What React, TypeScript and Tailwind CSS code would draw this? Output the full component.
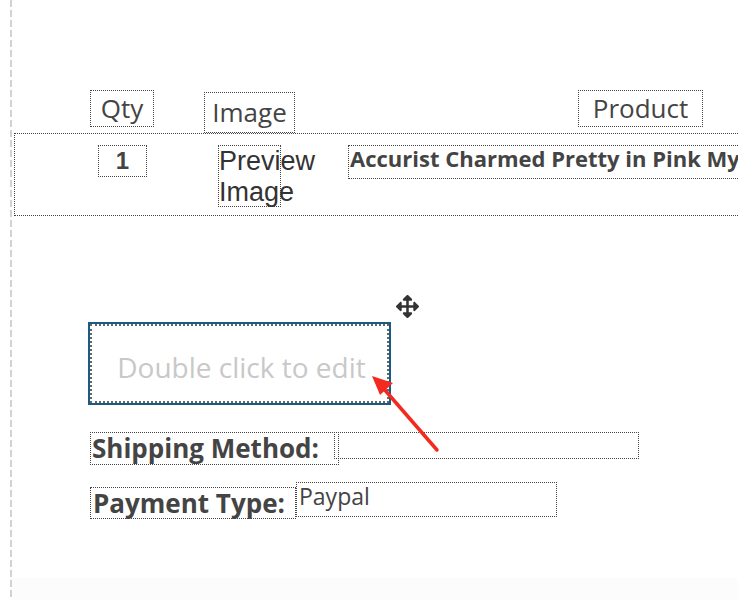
import { FaArrowsAlt } from "react-icons/fa";

const dotted = "border border-dotted border-[#444]";

export default function App() {
  return (
    <div className="relative flex h-[600px] w-[738px] overflow-hidden bg-white font-['Open_Sans',sans-serif] text-[#444]">
      <div className="w-[10px] shrink-0" />
      <div className="w-[2px] shrink-0 bg-[repeating-linear-gradient(to_bottom,#d2d2d2_0_7px,transparent_7px_10px)]" />

      <div className="flex min-w-0 flex-1 flex-col">
        <div className="flex-1 pt-[90px]">
          {/* header labels */}
          <div className="flex h-[43px] items-start pl-[78px]">
            <div className={`${dotted} flex h-[37px] w-[64px] items-center justify-center text-[26px]`}>
              Qty
            </div>
            <div className={`${dotted} ml-[50px] mt-[2px] flex h-[41px] w-[91px] items-center justify-center text-[26px]`}>
              Image
            </div>
            <div className={`${dotted} ml-[283px] flex h-[37px] w-[125px] shrink-0 items-center justify-center text-[26px]`}>
              Product
            </div>
          </div>

          {/* item row */}
          <div className="ml-[2px] flex h-[83px] w-[800px] items-start border-y border-l border-dotted border-[#444] pt-[11px]">
            <div className={`${dotted} ml-[83px] flex h-[32px] w-[49px] items-center justify-center font-['Liberation_Sans',sans-serif] text-[24px] font-bold`}>
              1
            </div>
            <div className={`${dotted} ml-[71px] h-[62px] w-[63px] whitespace-nowrap font-['Liberation_Sans',sans-serif] text-[27px] leading-[31px] text-[#333]`}>
              Preview
              <br />
              Image
            </div>
            <div className={`${dotted} ml-[67px] flex h-[34px] w-[420px] shrink-0 items-center whitespace-nowrap pb-[7px] pl-[1px] text-[22px] font-bold`}>
              Accurist Charmed Pretty in Pink My
            </div>
          </div>

          {/* editable text block */}
          <div className="ml-[76px] mt-[106px] h-[83px] w-[303px] border-2 border-[#1c5a86]">
            <div className="flex h-full w-full items-center justify-center border-2 border-dotted border-[#666] pt-[6px] pl-[4px] text-[28px] text-[#c8c8c8]">
              Double click to edit
            </div>
          </div>

          {/* shipping */}
          <div className="ml-[78px] mt-[27px] flex items-start">
            <div className={`${dotted} flex h-[33px] w-[249px] items-center pl-[1px] text-[26px] font-bold`}>
              Shipping Method:
            </div>
            <div className={`${dotted} -ml-[5px] h-[27px] w-[305px]`} />
          </div>

          {/* payment */}
          <div className="ml-[78px] mt-[17px] flex items-start">
            <div className={`${dotted} mt-[5px] flex h-[32px] w-[206px] items-center pl-[2px] text-[26px] font-bold`}>
              Payment Type:
            </div>
            <div className={`${dotted} h-[35px] w-[261px] pl-[2px] text-[23px] leading-[26px]`}>
              Paypal
            </div>
          </div>
        </div>
        <div className="h-[22px] bg-[#fcfcfc]" />
      </div>

      {/* move handle */}
      <FaArrowsAlt className="absolute left-[396px] top-[295px] text-[23px] text-[#333]" />

      {/* annotation arrow */}
      <svg className="absolute left-0 top-0" width="738" height="600" viewBox="0 0 738 600">
        <line x1="437" y1="450" x2="384" y2="389" stroke="#f22a1f" strokeWidth="3.5" strokeLinecap="round" />
        <polygon points="372,376 393,383 380,395" fill="#f22a1f" />
      </svg>
    </div>
  );
}
